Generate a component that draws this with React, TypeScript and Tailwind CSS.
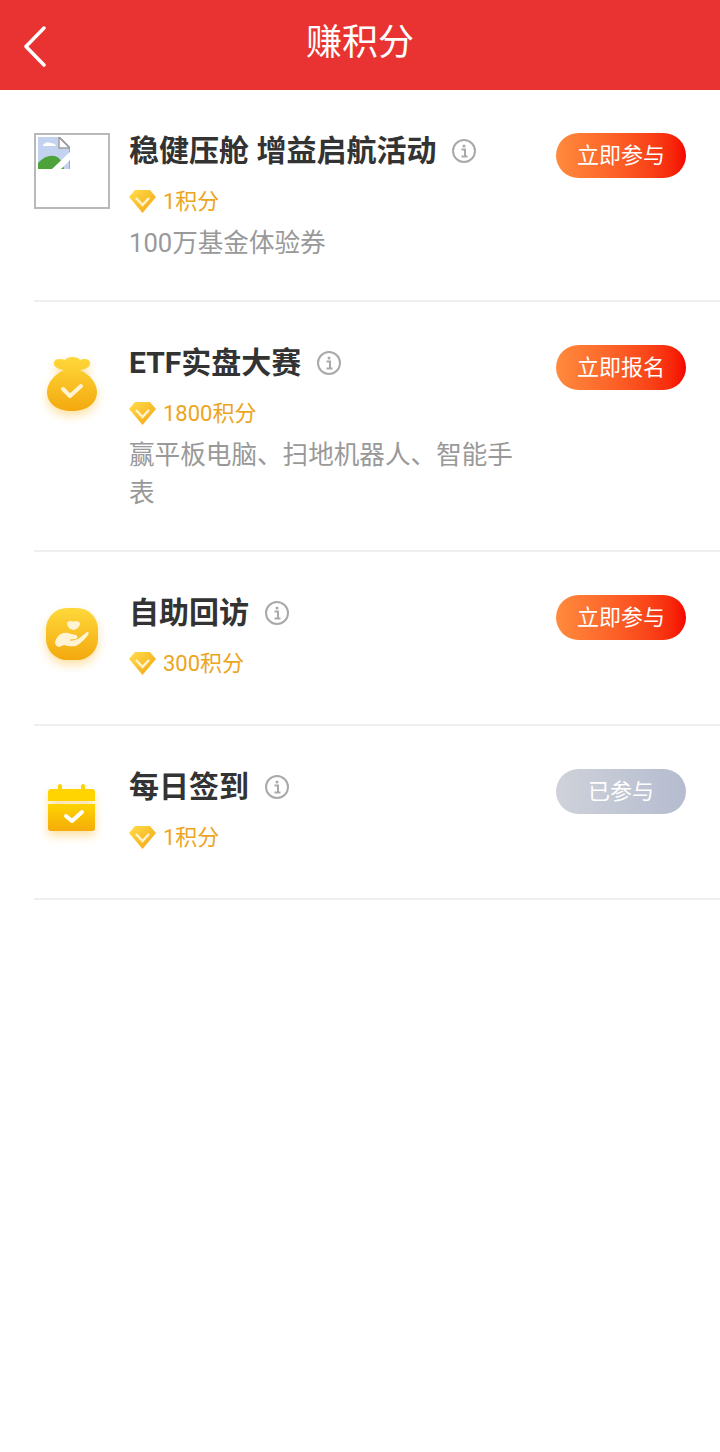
import type { ReactNode } from "react";

function BrokenImage() {
  return (
    <div className="w-[76px] h-[76px] border-2 border-[#b9b9b9] p-[2px]">
      <svg width="32" height="32" viewBox="0 0 32 32" className="block">
        <path d="M0 0H21L32 11V32H0Z" fill="#c3d3ef" />
        <path d="M21 0V11H32Z" fill="#fff" stroke="#a0a0a0" strokeWidth="1.5" />
        <path d="M21 0L32 11V32" fill="none" stroke="#9a9a9a" strokeWidth="1.5" />
        <path d="M5 8q3-4 7-2q5 0 6 3H5Z" fill="#fff" />
        <path d="M0 32V26Q8 17 17 19Q24 21 26 32Z" fill="#4da33a" />
        <path d="M14 32L32 15V23L23 32Z" fill="#fff" />
      </svg>
    </div>
  );
}

function IconBag() {
  return (
    <svg width="76" height="76" viewBox="0 0 76 76" className="block drop-shadow-[0_5px_5px_rgba(250,190,60,0.45)]">
      <defs>
        <linearGradient id="bag" x1="0" y1="0" x2="0" y2="1">
          <stop offset="0" stopColor="#ffd83a" />
          <stop offset="1" stopColor="#f3a90f" />
        </linearGradient>
      </defs>
      <path
        d="M30 25C19 30 13 39 13 47C13 59 24 66 38 66C52 66 63 59 63 47C63 39 57 30 46 25C53 24 57 21 56 17C54 13 49 14 46 15C44 11 33 11 31 15C27 14 22 13 20 17C19 21 23 24 30 25Z"
        fill="url(#bag)"
      />
      <path d="M29 44L36 51L47 41" fill="none" stroke="#fff3d4" strokeWidth="4" strokeLinecap="round" strokeLinejoin="round" />
    </svg>
  );
}

function IconHand() {
  return (
    <svg width="76" height="76" viewBox="0 0 76 76" className="block drop-shadow-[0_5px_5px_rgba(250,190,60,0.45)]">
      <defs>
        <linearGradient id="hand" x1="0" y1="0" x2="0" y2="1">
          <stop offset="0" stopColor="#ffd83a" />
          <stop offset="1" stopColor="#f3a90f" />
        </linearGradient>
      </defs>
      <rect x="12" y="13" width="52" height="52" rx="21" fill="url(#hand)" />
      <path d="M33 29Q33 26 37 26Q39 27 41 26Q46 26 46 29Q45 34 39.500 35Q34 34 33 29Z" fill="#fff3d4" />
      <path
        d="M21 47Q23 40 29 38Q33 37 37 39L42 40Q45 42 42 44L36 44.500L37 46L44 44L53 37Q56 37 54 40Q49 47 42 51Q35 52 30 50L25 52Q21 51 21 47Z"
        fill="#fff3d4"
      />
    </svg>
  );
}

function IconCalendar() {
  return (
    <svg width="76" height="76" viewBox="0 0 76 76" className="block drop-shadow-[0_5px_5px_rgba(250,190,60,0.45)]">
      <defs>
        <linearGradient id="cal" x1="0" y1="0" x2="0" y2="1">
          <stop offset="0" stopColor="#ffd400" />
          <stop offset="1" stopColor="#f5ab0a" />
        </linearGradient>
      </defs>
      <path
        d="M14 32V23Q14 20 17 20H24V17Q24 15 26 15Q28 15 28 17V20H47V17Q47 15 49 15Q51 15 51 17V20H58Q61 20 61 23V32Z"
        fill="#ffd400"
      />
      <path d="M14 35H61V59Q61 62 58 62H17Q14 62 14 59Z" fill="url(#cal)" />
      <path d="M32 47L38 52L48 43" fill="none" stroke="#fff" strokeWidth="4" strokeLinecap="round" strokeLinejoin="round" />
    </svg>
  );
}

function Diamond() {
  return (
    <svg width="27" height="23" viewBox="0 0 27 23" className="shrink-0">
      <defs>
        <linearGradient id="dia" x1="0" y1="0" x2="1" y2="1">
          <stop offset="0" stopColor="#ffdf4a" />
          <stop offset="1" stopColor="#f3a212" />
        </linearGradient>
      </defs>
      <path d="M6 0H21L27 7L13.500 23L0 7Z" fill="url(#dia)" />
      <path d="M7 8L13.500 15L20 8" fill="none" stroke="#fff3cf" strokeWidth="2.500" />
    </svg>
  );
}

function InfoIcon() {
  return (
    <svg width="24" height="24" viewBox="0 0 24 24" className="shrink-0">
      <circle cx="12" cy="12" r="11" fill="none" stroke="#a9a9a9" strokeWidth="2" />
      <circle cx="12" cy="7" r="1.500" fill="#a9a9a9" />
      <path d="M9.500 10.500H13V17M9.500 17.500H15.500" fill="none" stroke="#a9a9a9" strokeWidth="2" />
    </svg>
  );
}

function Row({
  icon,
  title,
  points,
  desc,
  action,
  done,
}: {
  icon: ReactNode;
  title: string;
  points: string;
  desc?: string;
  action: string;
  done?: boolean;
}) {
  return (
    <div className="ml-[34px] border-b-2 border-[#eeeeee] pt-[40px] pb-[38px] flex items-start">
      <div className="w-[76px] mt-[3px] mr-[19px] shrink-0">{icon}</div>
      <div className="w-[400px]">
        <div className="flex items-center gap-[16px] h-[42px]">
          <span className="text-[30px] leading-[42px] font-bold text-[#333333] whitespace-pre">{title}</span>
          <InfoIcon />
        </div>
        <div className="flex items-center gap-[7px] h-[34px] mt-[12px] mb-[6px]">
          <Diamond />
          <span className="text-[22px] text-[#eca521]">{points}</span>
        </div>
        {desc && <p className="text-[25.600px] leading-[38px] text-[#999999]">{desc}</p>}
      </div>
      <button
        className={
          done
            ? "ml-auto mr-[34px] mt-[3px] w-[130px] h-[45px] rounded-full text-[22px] text-white bg-gradient-to-r from-[#cfd2da] to-[#b5bccf]"
            : "ml-auto mr-[34px] mt-[3px] w-[130px] h-[45px] rounded-full text-[22px] text-white bg-gradient-to-r from-[#ff8a3d] to-[#f50000]"
        }
      >
        {action}
      </button>
    </div>
  );
}

export default function App() {
  return (
    <div className="min-h-[1452px] bg-white font-['Roboto','Noto_Sans_CJK_SC',sans-serif]">
      <header className="relative h-[90px] bg-[#e93333] flex items-center justify-center">
        <svg width="24" height="42" viewBox="0 0 24 42" className="absolute left-[23px] top-[26px]">
          <path d="M21 2L3 20.500L21 39" fill="none" stroke="#fff" strokeWidth="3.500" strokeLinecap="round" strokeLinejoin="round" />
        </svg>
        <h1 className="text-[36px] text-white font-normal -mt-[4px]">赚积分</h1>
      </header>
      <Row
        icon={<BrokenImage />}
        title="稳健压舱 增益启航活动"
        points="1积分"
        desc="100万基金体验券"
        action="立即参与"
      />
      <Row
        icon={<IconBag />}
        title="ETF实盘大赛"
        points="1800积分"
        desc="赢平板电脑、扫地机器人、智能手表"
        action="立即报名"
      />
      <Row icon={<IconHand />} title="自助回访" points="300积分" action="立即参与" />
      <Row icon={<IconCalendar />} title="每日签到" points="1积分" action="已参与" done />
    </div>
  );
}
